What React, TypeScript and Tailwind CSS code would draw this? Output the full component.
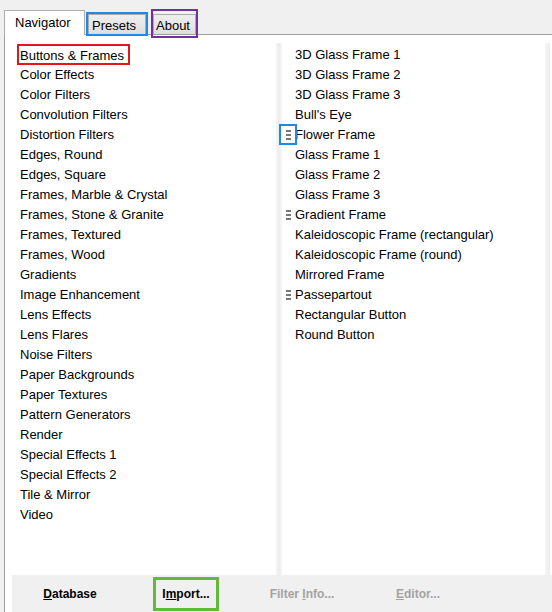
import React from "react";

const categories = [
  "Buttons & Frames",
  "Color Effects",
  "Color Filters",
  "Convolution Filters",
  "Distortion Filters",
  "Edges, Round",
  "Edges, Square",
  "Frames, Marble & Crystal",
  "Frames, Stone & Granite",
  "Frames, Textured",
  "Frames, Wood",
  "Gradients",
  "Image Enhancement",
  "Lens Effects",
  "Lens Flares",
  "Noise Filters",
  "Paper Backgrounds",
  "Paper Textures",
  "Pattern Generators",
  "Render",
  "Special Effects 1",
  "Special Effects 2",
  "Tile & Mirror",
  "Video",
];

const filters = [
  { name: "3D Glass Frame 1" },
  { name: "3D Glass Frame 2" },
  { name: "3D Glass Frame 3" },
  { name: "Bull's Eye" },
  { name: "Flower Frame", grip: true, marked: true },
  { name: "Glass Frame 1" },
  { name: "Glass Frame 2" },
  { name: "Glass Frame 3" },
  { name: "Gradient Frame", grip: true },
  { name: "Kaleidoscopic Frame (rectangular)" },
  { name: "Kaleidoscopic Frame (round)" },
  { name: "Mirrored Frame" },
  { name: "Passepartout", grip: true },
  { name: "Rectangular Button" },
  { name: "Round Button" },
];

const Grip = () => (
  <div className="flex flex-col gap-[2px]">
    <div className="w-[5px] h-[2px] bg-[#767676]" />
    <div className="w-[5px] h-[2px] bg-[#767676]" />
    <div className="w-[5px] h-[2px] bg-[#767676]" />
  </div>
);

const App = (): React.ReactElement => {
  return (
    <div className="w-[552px] h-[612px] bg-[#f0f0f0] flex flex-col overflow-hidden text-[13px] text-black font-['Liberation_Sans',Arial,sans-serif]">
      {/* tabs */}
      <div className="h-[34px] flex items-end pl-[4px] relative z-10">
        <div className="h-[25px] w-[81px] mb-[-1px] bg-white border border-b-0 border-[#adadad] pl-[10px] pt-[4px] leading-[15px]">
          Navigator
        </div>
        <div className="ml-[3px] h-[20px] w-[58px] bg-gradient-to-b from-[#efefef] to-[#dedede] border border-b-0 border-[#acacac] outline-2 outline-[#2088e8] pl-[3px] pt-[3px] leading-[15px]">
          Presets
        </div>
        <div className="relative ml-[7px] h-[20px] w-[43px] bg-gradient-to-b from-[#efefef] to-[#dedede] border border-b-0 border-[#acacac] pl-[2px] pt-[3px] leading-[15px]">
          About
          <span className="absolute -top-[6px] -bottom-[4px] -left-[3px] -right-[3px] border-2 border-[#7030a0]" />
        </div>
      </div>

      {/* panel */}
      <div className="flex-1 flex flex-col ml-[4px] bg-white border-t border-l border-[#a0a0a0]">
        <div className="h-[8px]" />
        <div className="h-[532px] flex">
          <ul className="w-[271px] pl-[12px] pt-[1px]">
            {categories.map((c, i) => (
              <li key={c} className="h-[20px] leading-[20px]">
                {i === 0 ? (
                  <span className="inline-block h-[21px] leading-[19px] pl-[1px] pr-[4px] border-2 border-[#e3161e]">
                    {c}
                  </span>
                ) : (
                  <span className="pl-[3px] relative top-[1px]">{c}</span>
                )}
              </li>
            ))}
          </ul>
          <div className="w-[6px] bg-gradient-to-r from-[#f7f7f7] via-[#ececec] to-[#f7f7f7]" />
          <ul className="w-[263px] pt-[2px]">
            {filters.map((f) => (
              <li key={f.name} className="relative h-[20px] leading-[20px] flex items-center">
                <div className="w-[13px] pl-[4px] flex items-center">
                  {f.grip && <Grip />}
                </div>
                <span className="whitespace-nowrap">{f.name}</span>
                {f.marked && (
                  <span className="absolute left-[-3px] top-[-1px] w-[18px] h-[21px] border-2 border-[#2088e8]" />
                )}
              </li>
            ))}
          </ul>
          <div className="w-[5px] bg-gradient-to-r from-[#f6f6f6] to-[#ececec]" />
        </div>

        {/* button bar */}
        <div className="flex-1 ml-[7px] bg-[#f0f0f0] flex text-[12px] font-bold">
          <div className="w-[116px] flex items-center justify-center pt-[1px]">
            <span>
              <span className="underline">D</span>atabase
            </span>
          </div>
          <div className="w-[116px] flex items-center justify-center">
            <span className="h-[34px] w-[66px] flex items-center justify-center border-[3px] border-[#5fbb3c] pt-[1px]">
              <span>
                I<span className="underline">m</span>port...
              </span>
            </span>
          </div>
          <div className="w-[116px] flex items-center justify-center text-[#a3a3a3] pt-[1px]">
            <span>
              Filter <span className="underline">I</span>nfo...
            </span>
          </div>
          <div className="w-[116px] flex items-center justify-center text-[#a3a3a3] pt-[1px]">
            <span>
              <span className="underline">E</span>ditor...
            </span>
          </div>
        </div>
      </div>
    </div>
  );
};

export default App;
